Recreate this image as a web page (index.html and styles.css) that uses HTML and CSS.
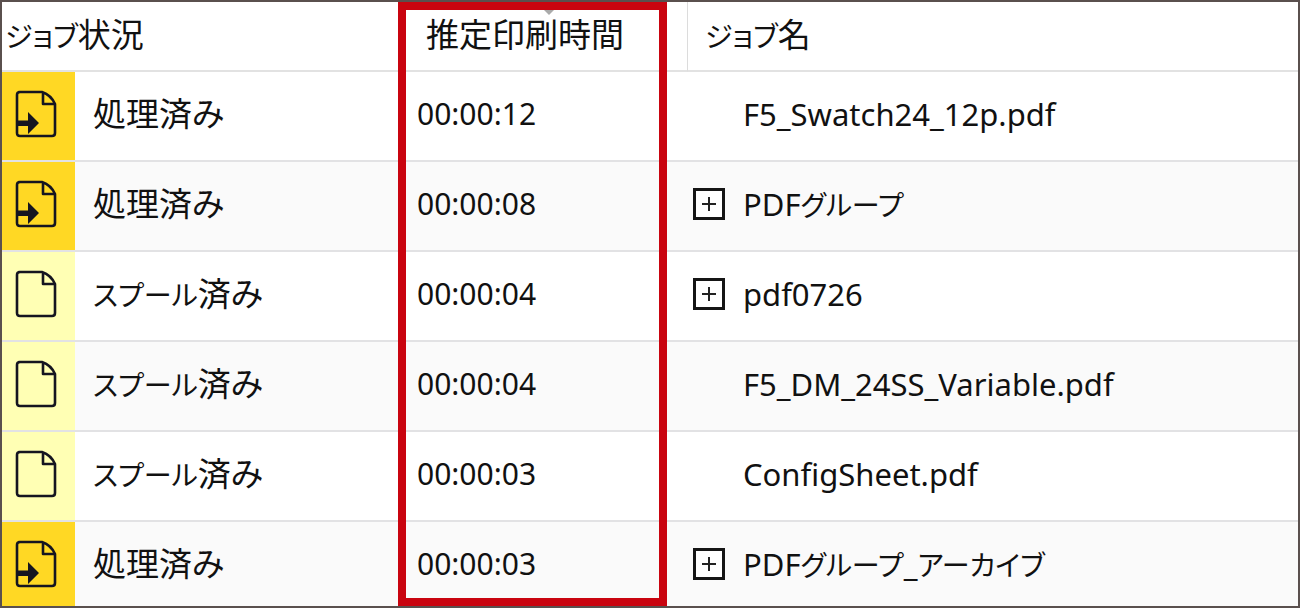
FILE: index.html
```html
<!DOCTYPE html>
<html lang="ja">
<head>
<meta charset="utf-8">
<title>ジョブ一覧</title>
<link rel="stylesheet" href="styles.css">
</head>
<body>
<svg class="defs" aria-hidden="true">
  <symbol id="page" viewBox="0 0 42 48">
    <path d="M4 2H27Q36 5 40 14V43Q40 46 37 46H5Q2 46 2 43V5Q2 2 5 2Z M28 3V14H40" fill="none" stroke="currentColor" stroke-width="2.6" stroke-linejoin="round"/>
  </symbol>
  <symbol id="page-in" viewBox="0 0 42 48">
    <use href="#page"/>
    <path d="M2 30.500H13V22L24 33L13 44V36H2Z" fill="currentColor"/>
  </symbol>
</svg>
<main class="panel">
  <table class="jobs">
    <colgroup><col class="col-status"><col class="col-time"><col></colgroup>
    <thead>
      <tr>
        <th scope="col"><span class="kana">ジョブ</span>状況</th>
        <th scope="col" class="time-head">推定印刷時間<svg class="sort" viewBox="0 0 14 7" aria-hidden="true"><path d="M0 0H14L7 7Z" fill="#aaa"/></svg></th>
        <th scope="col" class="name-head"><span class="kana">ジョブ</span>名</th>
      </tr>
    </thead>
    <tbody>
      <tr>
        <td><div class="cell"><span class="state processed"><svg class="icon" aria-hidden="true"><use href="#page-in"/></svg></span><span class="label">処理済み</span></div></td>
        <td><div class="cell time">00:00:12</div></td>
        <td><div class="cell name"><span class="slot"></span><span>F5_Swatch24_12p.pdf</span></div></td>
      </tr>
      <tr>
        <td><div class="cell"><span class="state processed"><svg class="icon" aria-hidden="true"><use href="#page-in"/></svg></span><span class="label">処理済み</span></div></td>
        <td><div class="cell time">00:00:08</div></td>
        <td><div class="cell name"><button class="slot expand" type="button" aria-label="展開"></button><span>PDF<span class="kana">グループ</span></span></div></td>
      </tr>
      <tr>
        <td><div class="cell"><span class="state spooled"><svg class="icon" aria-hidden="true"><use href="#page"/></svg></span><span class="label"><span class="kana">スプール</span>済み</span></div></td>
        <td><div class="cell time">00:00:04</div></td>
        <td><div class="cell name"><button class="slot expand" type="button" aria-label="展開"></button><span>pdf0726</span></div></td>
      </tr>
      <tr>
        <td><div class="cell"><span class="state spooled"><svg class="icon" aria-hidden="true"><use href="#page"/></svg></span><span class="label"><span class="kana">スプール</span>済み</span></div></td>
        <td><div class="cell time">00:00:04</div></td>
        <td><div class="cell name"><span class="slot"></span><span>F5_DM_24SS_Variable.pdf</span></div></td>
      </tr>
      <tr>
        <td><div class="cell"><span class="state spooled"><svg class="icon" aria-hidden="true"><use href="#page"/></svg></span><span class="label"><span class="kana">スプール</span>済み</span></div></td>
        <td><div class="cell time">00:00:03</div></td>
        <td><div class="cell name"><span class="slot"></span><span>ConfigSheet.pdf</span></div></td>
      </tr>
      <tr>
        <td><div class="cell"><span class="state processed"><svg class="icon" aria-hidden="true"><use href="#page-in"/></svg></span><span class="label">処理済み</span></div></td>
        <td><div class="cell time">00:00:03</div></td>
        <td><div class="cell name"><button class="slot expand" type="button" aria-label="展開"></button><span>PDF<span class="kana">グループ</span>_<span class="kana">アーカイブ</span></span></div></td>
      </tr>
    </tbody>
  </table>
  <div class="highlight"></div>
</main>
</body>
</html>
```
FILE: styles.css
```css
* { box-sizing: border-box; }
body {
  margin: 0;
  background: #fff;
  color: #111;
  font: 30px/40px "Noto Sans", "Noto Sans CJK JP", sans-serif;
}
.defs { position: absolute; width: 0; height: 0; }
.panel { position: relative; border: 2px solid #5a504e; }
.jobs { width: 100%; border-collapse: separate; border-spacing: 0; table-layout: fixed; }
.col-status { width: 402px; }
.col-time { width: 283px; }
th {
  height: 70px;
  padding: 11px 3px;
  border-bottom: 2px solid #e2e2e2;
  vertical-align: top;
  text-align: left;
  font-weight: 400;
}
th, .label {
  font-family: "Noto Sans CJK JP", sans-serif;
  font-size: 33px;
  line-height: 40px;
  font-feature-settings: "palt";
}
.label { padding-bottom: 4px; }
.kana {
  font-family: "Noto Sans CJK JP", sans-serif;
  font-size: 28px;
  line-height: 0;
  font-feature-settings: "palt";
}
.time-head { position: relative; padding-left: 22px; }
.sort { position: absolute; top: 6px; left: 138px; width: 14px; height: 7px; }
.name-head { padding-left: 17px; border-left: 1px solid #dcdcdc; }
td { padding: 0; border-bottom: 2px solid #e2e2e4; vertical-align: top; }
tbody tr { height: 90px; }
tbody tr:nth-child(even) { background: #fafafa; }
tbody tr:last-child { height: 84px; }
tbody tr:last-child td { border-bottom: 0; }
.cell { display: flex; align-items: center; height: 84px; white-space: nowrap; }
.state {
  display: flex;
  align-items: center;
  align-self: flex-start;
  width: 73px;
  height: 88px;
  padding: 0 0 4px 13px;
  margin-right: 18px;
}
tr:last-child .state { height: 84px; padding-bottom: 0; }
.processed { background: #ffd824; }
.spooled { background: #ffffb4; }
.icon { width: 42px; height: 48px; color: #151520; }
.time { padding-left: 13px; }
.name { gap: 18px; padding-left: 6px; font-size: 31px; }
.slot { flex: none; width: 32px; height: 32px; }
.expand {
  padding: 0;
  border: 3px solid #151515;
  background:
    linear-gradient(#222, #222) center / 14px 2px no-repeat,
    linear-gradient(#222, #222) center / 2px 14px no-repeat,
    #fff;
}
.highlight {
  position: absolute;
  top: 0;
  bottom: 0;
  left: 396px;
  width: 269px;
  border: 8px solid #c9040f;
  pointer-events: none;
}
```
